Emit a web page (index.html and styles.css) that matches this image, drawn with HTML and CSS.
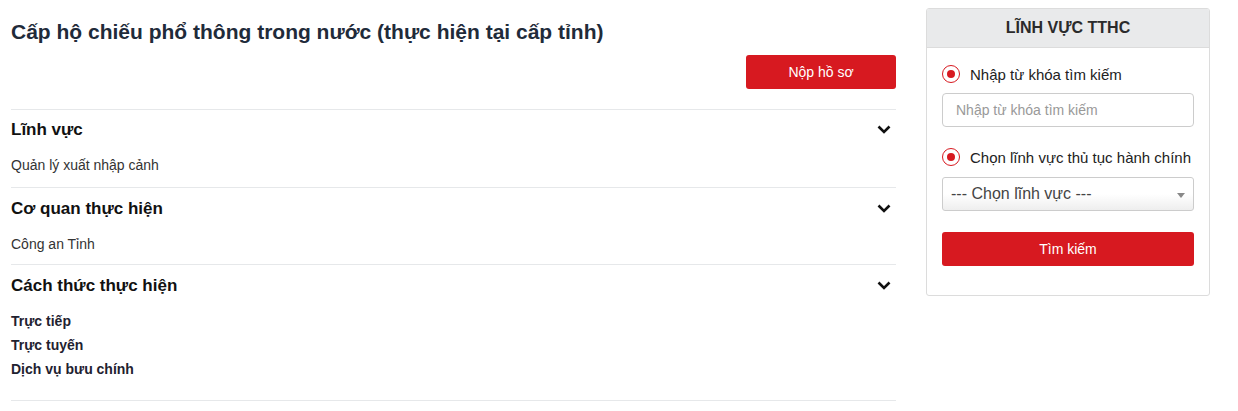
FILE: index.html
```html
<!DOCTYPE html>
<html lang="vi">
<head>
<meta charset="utf-8">
<title>Cấp hộ chiếu phổ thông</title>
<link rel="stylesheet" href="styles.css">
</head>
<body>
<div class="page">
  <main class="main">
    <h1 class="title">Cấp hộ chiếu phổ thông trong nước (thực hiện tại cấp tỉnh)</h1>
    <div class="actions"><button class="btn btn-submit">Nộp hồ sơ</button></div>

    <section class="sec">
      <div class="sec-head"><h2>Lĩnh vực</h2>
        <svg class="chev" width="14" height="9" viewBox="0 0 14 9"><polyline points="1.5,1.5 7,7 12.5,1.5" fill="none" stroke="#111" stroke-width="2.6"/></svg>
      </div>
      <div class="sec-body">Quản lý xuất nhập cảnh</div>
    </section>

    <section class="sec">
      <div class="sec-head"><h2>Cơ quan thực hiện</h2>
        <svg class="chev" width="14" height="9" viewBox="0 0 14 9"><polyline points="1.5,1.5 7,7 12.5,1.5" fill="none" stroke="#111" stroke-width="2.6"/></svg>
      </div>
      <div class="sec-body">Công an Tỉnh</div>
    </section>

    <section class="sec sec-last">
      <div class="sec-head"><h2>Cách thức thực hiện</h2>
        <svg class="chev" width="14" height="9" viewBox="0 0 14 9"><polyline points="1.5,1.5 7,7 12.5,1.5" fill="none" stroke="#111" stroke-width="2.6"/></svg>
      </div>
      <ul class="ways">
        <li>Trực tiếp</li>
        <li>Trực tuyến</li>
        <li>Dịch vụ bưu chính</li>
      </ul>
    </section>
  </main>

  <aside class="side">
    <div class="side-head">LĨNH VỰC TTHC</div>
    <div class="side-body">
      <label class="radio-row"><span class="radio"><span class="dot"></span></span>Nhập từ khóa tìm kiếm</label>
      <input class="field" type="text" placeholder="Nhập từ khóa tìm kiếm">
      <label class="radio-row row2"><span class="radio"><span class="dot"></span></span>Chọn lĩnh vực thủ tục hành chính</label>
      <div class="select"><span>--- Chọn lĩnh vực ---</span><span class="caret"></span></div>
      <button class="btn btn-search">Tìm kiếm</button>
    </div>
  </aside>
</div>
</body>
</html>
```

FILE: styles.css
```css
* { box-sizing: border-box; }
html, body { margin: 0; padding: 0; background: #fff; }
body { font-family: "Liberation Sans", Arial, sans-serif; color: #333; }

.page {
  display: flex;
  align-items: flex-start;
  gap: 30px;
  padding: 8px 28px 0 11px;
}

.main { width: 885px; flex: none; }

.title {
  margin: 10px 0 0;
  font-size: 21px;
  line-height: 28px;
  font-weight: bold;
  color: #1f2b3a;
}

.actions { display: flex; justify-content: flex-end; margin-top: 9px; }

.btn {
  border: none;
  border-radius: 3px;
  background: #d71920;
  color: #fff;
  font-family: "Liberation Sans", Arial, sans-serif;
  font-size: 14px;
  cursor: pointer;
}

.btn-submit { width: 150px; height: 34px; }

.sec { border-top: 1px solid #e6e8ea; padding: 9px 0 10px; }
.actions + .sec { margin-top: 20px; }
.sec + .sec { padding-top: 10px; padding-bottom: 8px; }
.sec-last { border-bottom: 1px solid #e6e8ea; }
.sec + .sec-last { padding-top: 10px; padding-bottom: 19px; }

.sec-head { display: flex; justify-content: space-between; align-items: center; height: 22px; }
.sec-head h2 { margin: 0; font-size: 17px; line-height: 22px; font-weight: bold; color: #111; }
.chev { margin-right: 5px; margin-top: -2px; }

.sec-body { margin-top: 12px; font-size: 14px; line-height: 24px; color: #333; }

.ways { list-style: none; margin: 12px 0 0; padding: 0; }
.ways li { font-size: 14px; line-height: 24px; font-weight: bold; color: #1f2230; }

.side {
  width: 284px;
  flex: none;
  border: 1px solid #dcdcdc;
  border-radius: 3px;
  overflow: hidden;
}

.side-head {
  height: 39px;
  background: #e9eaeb;
  border-bottom: 1px solid #dcdcdc;
  text-align: center;
  font-size: 16px;
  font-weight: bold;
  line-height: 38px;
  color: #2b2b2b;
}

.side-body { padding: 16px 15px 29px; display: flex; flex-direction: column; }

.radio-row {
  display: flex;
  align-items: center;
  height: 20px;
  font-size: 15px;
  color: #222;
}
.row2 { margin-top: 20px; }

.radio {
  width: 18px; height: 18px;
  border: 1.5px solid #d71920;
  border-radius: 50%;
  display: flex; align-items: center; justify-content: center;
  margin-right: 10px;
  flex: none;
}
.dot { width: 8px; height: 8px; border-radius: 50%; background: #d71920; }

.field {
  margin-top: 9px;
  height: 34px;
  width: 100%;
  border: 1px solid #ccc;
  border-radius: 4px;
  padding: 0 13px;
  font-family: "Liberation Sans", Arial, sans-serif;
  font-size: 14px;
  color: #333;
}
.field::placeholder { color: #999; }

.select {
  margin-top: 10px;
  height: 34px;
  border: 1px solid #ccc;
  border-radius: 3px;
  background: linear-gradient(#fff 50%, #eeeeee);
  display: flex; align-items: center; justify-content: space-between;
  padding: 0 8px 0 8px;
  font-size: 16px;
  color: #444;
}
.caret {
  width: 0; height: 0;
  border-left: 4px solid transparent;
  border-right: 4px solid transparent;
  border-top: 5px solid #888;
  margin-top: 2px;
}

.btn-search { margin-top: 21px; height: 34px; width: 100%; }
```
